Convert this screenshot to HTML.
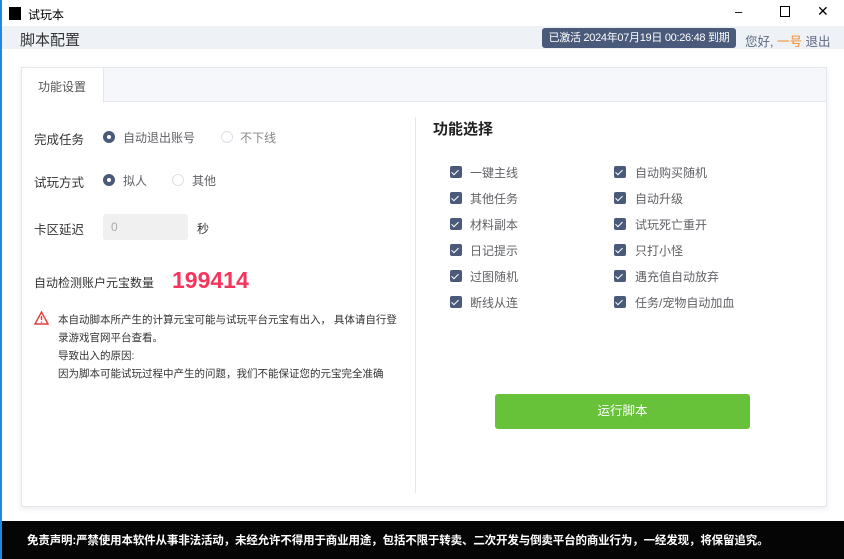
<!DOCTYPE html><html><head><meta charset="utf-8"><style>
*{margin:0;padding:0;box-sizing:border-box}
body{width:844px;height:559px;overflow:hidden;background:#fff;font-family:"Liberation Sans","Noto Sans CJK SC",sans-serif;position:relative;color:#333}
.a{position:absolute;white-space:nowrap}
.rad{position:absolute;width:12px;height:12px;border-radius:50%;border:1px solid #dcdfe6;background:#fff}
.rad.on{background:#4a5a7a;border-color:#4a5a7a}
.rad.on::after{content:"";position:absolute;left:3px;top:3px;width:4px;height:4px;border-radius:50%;background:#fff}
.cb{position:absolute;width:12px;height:12px;border-radius:2px;background:#4a5a7a}
.cb::after{content:"";position:absolute;left:3px;top:2px;width:3px;height:6px;border:solid #fff;border-width:0 1.5px 1.5px 0;transform:rotate(45deg)}
.t{font-size:12px;color:#606266}
</style></head><body>
<div class="a" style="left:0;top:0;width:2px;height:559px;background:#1e88e5"></div>
<div class="a" style="left:9px;top:7px;width:12px;height:13px;background:#000"></div>
<div class="a" style="left:28px;top:6px;font-size:12px;color:#000">试玩本</div>
<div class="a" style="left:735px;top:4px;font-size:13px;color:#000">–</div>
<div class="a" style="left:780px;top:6px;width:10px;height:11px;border:1px solid #000"></div>
<div class="a" style="left:817px;top:3px;font-size:14px;color:#000">✕</div>
<div class="a" style="left:2px;top:26px;width:842px;height:23px;background:#eef2f7"></div>
<div class="a" style="left:20px;top:29px;font-size:15px;color:#333">脚本配置</div>
<div class="a" style="left:542px;top:28px;width:194px;height:20px;background:#4a5a7a;border-radius:3px;color:#fff;font-size:11px;line-height:20px;text-align:center;letter-spacing:-0.3px">已激活 2024年07月19日 00:26:48 到期</div>
<div class="a" style="left:745px;top:31px;font-size:12.5px;color:#606a80">您好, <span style="color:#f08c2e">一号</span> 退出</div>
<div class="a" style="left:21px;top:67px;width:806px;height:440px;border:1px solid #e4e7ed;box-shadow:0 2px 6px rgba(0,0,0,.08)"></div>
<div class="a" style="left:22px;top:68px;width:804px;height:34px;background:#f5f7fa;border-bottom:1px solid #e4e7ed"></div>
<div class="a" style="left:22px;top:68px;width:82px;height:35px;background:#fff;border-right:1px solid #e4e7ed"></div>
<div class="a" style="left:38px;top:78px;font-size:12px;color:#555">功能设置</div>
<div class="a" style="left:34px;top:129px;font-size:12.5px">完成任务</div>
<div class="rad on" style="left:103px;top:131px"></div><div class="a t" style="left:123px;top:129px">自动退出账号</div>
<div class="rad" style="left:221px;top:131px"></div><div class="a t" style="left:240px;top:129px;color:#888">不下线</div>
<div class="a" style="left:34px;top:172px;font-size:12.5px">试玩方式</div>
<div class="rad on" style="left:103px;top:174px"></div><div class="a t" style="left:123px;top:172px">拟人</div>
<div class="rad" style="left:172px;top:174px"></div><div class="a t" style="left:192px;top:172px">其他</div>
<div class="a" style="left:34px;top:219px;font-size:12.5px">卡区延迟</div>
<div class="a" style="left:103px;top:214px;width:85px;height:26px;background:#f0f0f0;border-radius:3px;font-size:12px;color:#aaa;line-height:26px;padding-left:8px">0</div>
<div class="a" style="left:197px;top:220px;font-size:12px">秒</div>
<div class="a" style="left:34px;top:274px;font-size:12px">自动检测账户元宝数量</div>
<div class="a" style="left:172px;top:267px;font-size:23px;font-weight:bold;color:#f5365c">199414</div>
<svg class="a" style="left:34px;top:311px" width="15" height="14" viewBox="0 0 15 14"><path d="M7.5 1 L14 13 H1 Z" fill="none" stroke="#e23c3c" stroke-width="1.4"/><path d="M7.5 5v4M7.5 10.5v1.2" stroke="#e23c3c" stroke-width="1.4"/></svg>
<div class="a" style="left:58px;top:311px;font-size:10.5px;line-height:18px;color:#333">本自动脚本所产生的计算元宝可能与试玩平台元宝有出入， 具体请自行登<br>录游戏官网平台查看。<br>导致出入的原因:<br>因为脚本可能试玩过程中产生的问题，我们不能保证您的元宝完全准确</div>
<div class="a" style="left:415px;top:117px;width:1px;height:376px;background:#e4e7ed"></div>
<div class="a" style="left:433px;top:118px;font-size:15px;font-weight:bold;color:#222">功能选择</div>
<div class="cb" style="left:450px;top:166px"></div><div class="a t" style="left:470px;top:164px">一键主线</div>
<div class="cb" style="left:450px;top:192px"></div><div class="a t" style="left:470px;top:190px">其他任务</div>
<div class="cb" style="left:450px;top:218px"></div><div class="a t" style="left:470px;top:216px">材料副本</div>
<div class="cb" style="left:450px;top:244px"></div><div class="a t" style="left:470px;top:242px">日记提示</div>
<div class="cb" style="left:450px;top:270px"></div><div class="a t" style="left:470px;top:268px">过图随机</div>
<div class="cb" style="left:450px;top:296px"></div><div class="a t" style="left:470px;top:294px">断线从连</div>
<div class="cb" style="left:614px;top:166px"></div><div class="a t" style="left:635px;top:164px">自动购买随机</div>
<div class="cb" style="left:614px;top:192px"></div><div class="a t" style="left:635px;top:190px">自动升级</div>
<div class="cb" style="left:614px;top:218px"></div><div class="a t" style="left:635px;top:216px">试玩死亡重开</div>
<div class="cb" style="left:614px;top:244px"></div><div class="a t" style="left:635px;top:242px">只打小怪</div>
<div class="cb" style="left:614px;top:270px"></div><div class="a t" style="left:635px;top:268px">遇充值自动放弃</div>
<div class="cb" style="left:614px;top:296px"></div><div class="a t" style="left:635px;top:294px">任务/宠物自动加血</div>
<div class="a" style="left:495px;top:394px;width:255px;height:35px;background:#67c23a;border-radius:3px;color:#fff;font-size:12.5px;line-height:35px;text-align:center">运行脚本</div>
<div class="a" style="left:2px;top:521px;width:842px;height:38px;background:#050505;overflow:hidden">
<div class="a" style="left:25px;top:11px;font-size:11.5px;font-weight:bold;color:#fff;letter-spacing:-0.15px">免责声明:严禁使用本软件从事非法活动，未经允许不得用于商业用途，包括不限于转卖、二次开发与倒卖平台的商业行为，一经发现，将保留追究。</div></div>
</body></html>
